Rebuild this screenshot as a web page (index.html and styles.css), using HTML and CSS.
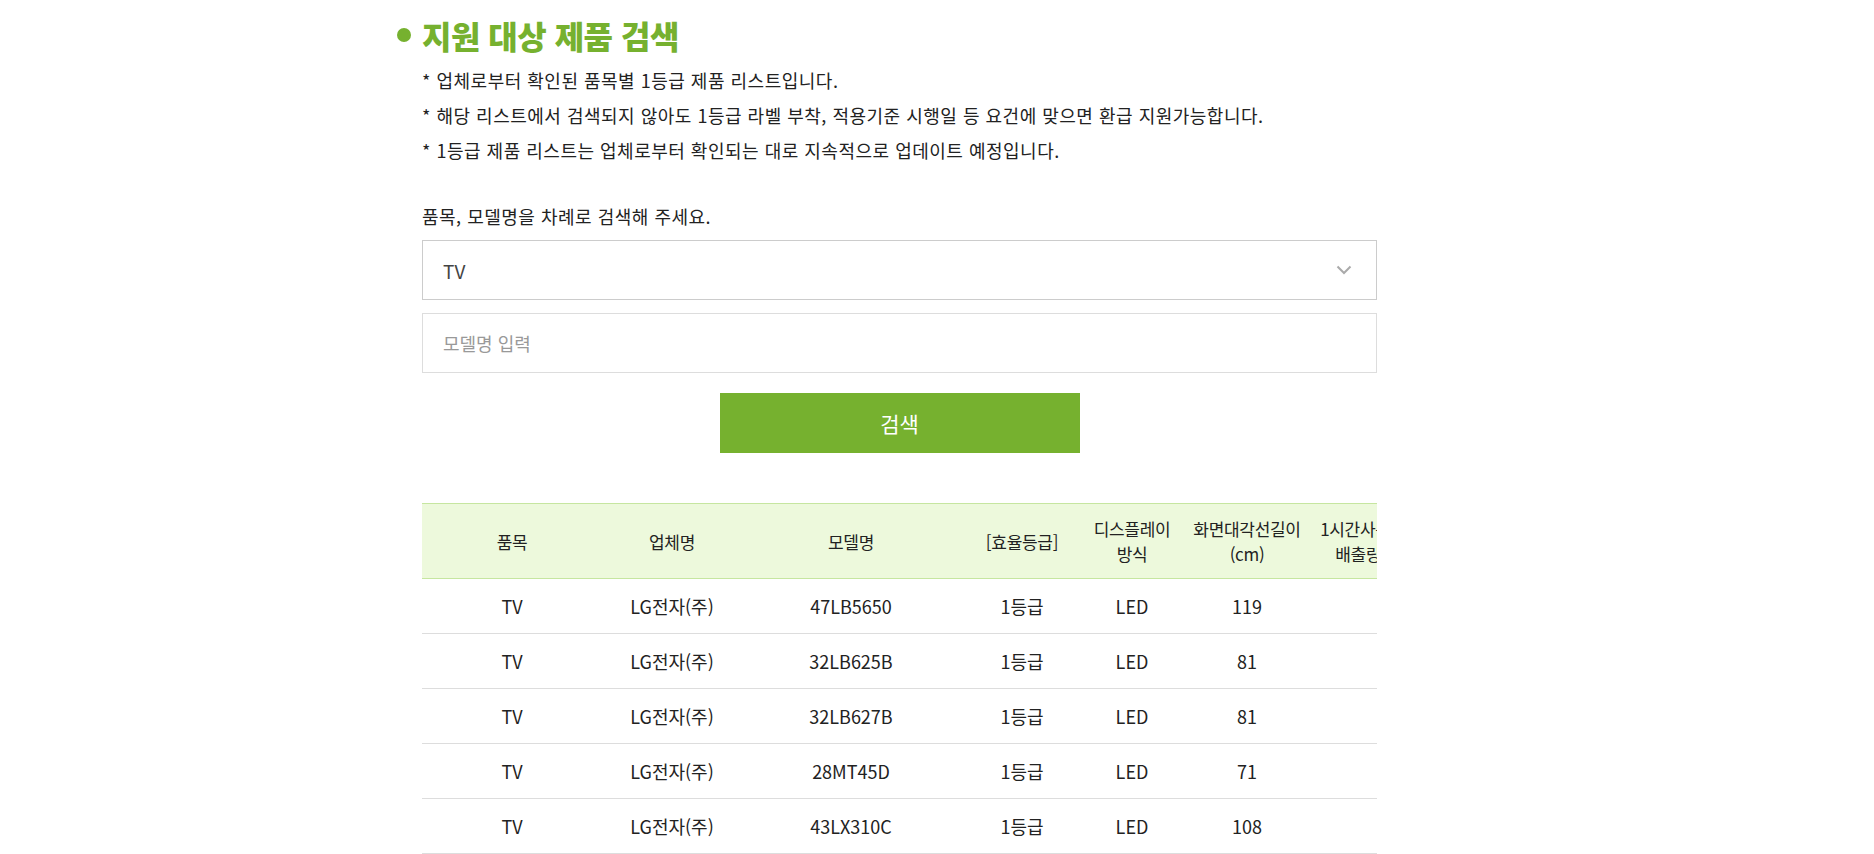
FILE: index.html
```html
<!DOCTYPE html>
<html lang="ko">
<head>
<meta charset="utf-8">
<title>지원 대상 제품 검색</title>
<link rel="stylesheet" href="styles.css">
</head>
<body>
<div class="page">
  <h2 class="title"><span class="dot"></span>지원 대상 제품 검색</h2>
  <div class="content">
    <ul class="notes">
      <li>* 업체로부터 확인된 품목별 1등급 제품 리스트입니다.</li>
      <li>* 해당 리스트에서 검색되지 않아도 1등급 라벨 부착, 적용기준 시행일 등 요건에 맞으면 환급 지원가능합니다.</li>
      <li>* 1등급 제품 리스트는 업체로부터 확인되는 대로 지속적으로 업데이트 예정입니다.</li>
    </ul>
    <p class="label">품목, 모델명을 차례로 검색해 주세요.</p>
    <div class="select">
      <span>TV</span>
      <svg class="chev" width="16" height="10" viewBox="0 0 16 10"><path d="M1.5 1.5 L8 8 L14.5 1.5" fill="none" stroke="#aaaaaa" stroke-width="2"/></svg>
    </div>
    <div class="input"><span class="ph">모델명 입력</span></div>
    <div class="btn-wrap"><button class="btn">검색</button></div>
    <div class="table-wrap">
      <table class="tbl">
        <colgroup>
          <col class="c1"><col class="c2"><col class="c3"><col class="c4"><col class="c5"><col class="c6"><col class="c7">
        </colgroup>
        <thead>
          <tr>
            <th>품목</th>
            <th>업체명</th>
            <th>모델명</th>
            <th>[효율등급]</th>
            <th>디스플레이<br>방식</th>
            <th>화면대각선길이<br>(cm)</th>
            <th>1시간사용시 CO2<br>배출량(kg/h)</th>
          </tr>
        </thead>
        <tbody>
          <tr><td>TV</td><td>LG전자(주)</td><td>47LB5650</td><td>1등급</td><td>LED</td><td>119</td><td></td></tr>
          <tr><td>TV</td><td>LG전자(주)</td><td>32LB625B</td><td>1등급</td><td>LED</td><td>81</td><td></td></tr>
          <tr><td>TV</td><td>LG전자(주)</td><td>32LB627B</td><td>1등급</td><td>LED</td><td>81</td><td></td></tr>
          <tr><td>TV</td><td>LG전자(주)</td><td>28MT45D</td><td>1등급</td><td>LED</td><td>71</td><td></td></tr>
          <tr><td>TV</td><td>LG전자(주)</td><td>43LX310C</td><td>1등급</td><td>LED</td><td>108</td><td></td></tr>
        </tbody>
      </table>
    </div>
  </div>
</div>
</body>
</html>
```

FILE: styles.css
```css
html, body {
  margin: 0;
  padding: 0;
  background: #ffffff;
}
body {
  font-family: "Noto Sans CJK KR", "Noto Sans", sans-serif;
  color: #222222;
}
.page {
  padding-top: 15px;
  padding-left: 397px;
  width: 980px;
}
.title {
  margin: 0;
  display: flex;
  align-items: center;
  height: 40px;
  font-size: 32px;
  font-weight: 900;
  color: #76b12f;
  letter-spacing: -0.5px;
}
.dot {
  width: 14px;
  height: 14px;
  border-radius: 50%;
  background: #76b12f;
  margin-right: 11px;
}
.content {
  margin-left: 25px;
  width: 955px;
}
.notes {
  list-style: none;
  margin: 8px 0 0;
  padding: 0;
}
.notes li {
  font-size: 18px;
  line-height: 35px;
  height: 35px;
  letter-spacing: 0.5px;
}
.label {
  margin: 35px 0 0;
  font-size: 18px;
  line-height: 26px;
  letter-spacing: 0.5px;
}
.select, .input {
  box-sizing: border-box;
  height: 60px;
  border: 1px solid #cccccc;
  display: flex;
  align-items: center;
  justify-content: space-between;
  padding: 0 24px 0 20px;
  font-size: 19px;
}
.select {
  margin-top: 11px;
  color: #444444;
}
.input {
  margin-top: 13px;
  border-color: #dddddd;
}
.ph {
  color: #999999;
  font-size: 18px;
}
.btn-wrap {
  display: flex;
  justify-content: center;
  margin-top: 20px;
}
.btn {
  width: 360px;
  height: 60px;
  border: 0;
  background: #76b12f;
  color: #ffffff;
  font-family: "Noto Sans CJK KR", "Noto Sans", sans-serif;
  font-size: 21px;
}
.table-wrap {
  margin-top: 50px;
  overflow: hidden;
  width: 955px;
}
.tbl {
  border-collapse: collapse;
  table-layout: fixed;
  width: 1026px;
}
.c1 { width: 180px; }
.c2 { width: 140px; }
.c3 { width: 218px; }
.c4 { width: 124px; }
.c5 { width: 96px; }
.c6 { width: 134px; }
.c7 { width: 134px; }
.tbl th {
  background: #edf9dc;
  border-top: 1px solid #c6e6a0;
  border-bottom: 1px solid #c6e6a0;
  height: 74px;
  padding: 0;
  font-size: 17px;
  font-weight: 400;
  line-height: 25px;
  text-align: center;
  white-space: nowrap;
  letter-spacing: -0.3px;
}
.tbl td {
  height: 54px;
  padding: 0;
  border-bottom: 1px solid #dddddd;
  text-align: center;
  font-size: 18px;
  white-space: nowrap;
}
```
